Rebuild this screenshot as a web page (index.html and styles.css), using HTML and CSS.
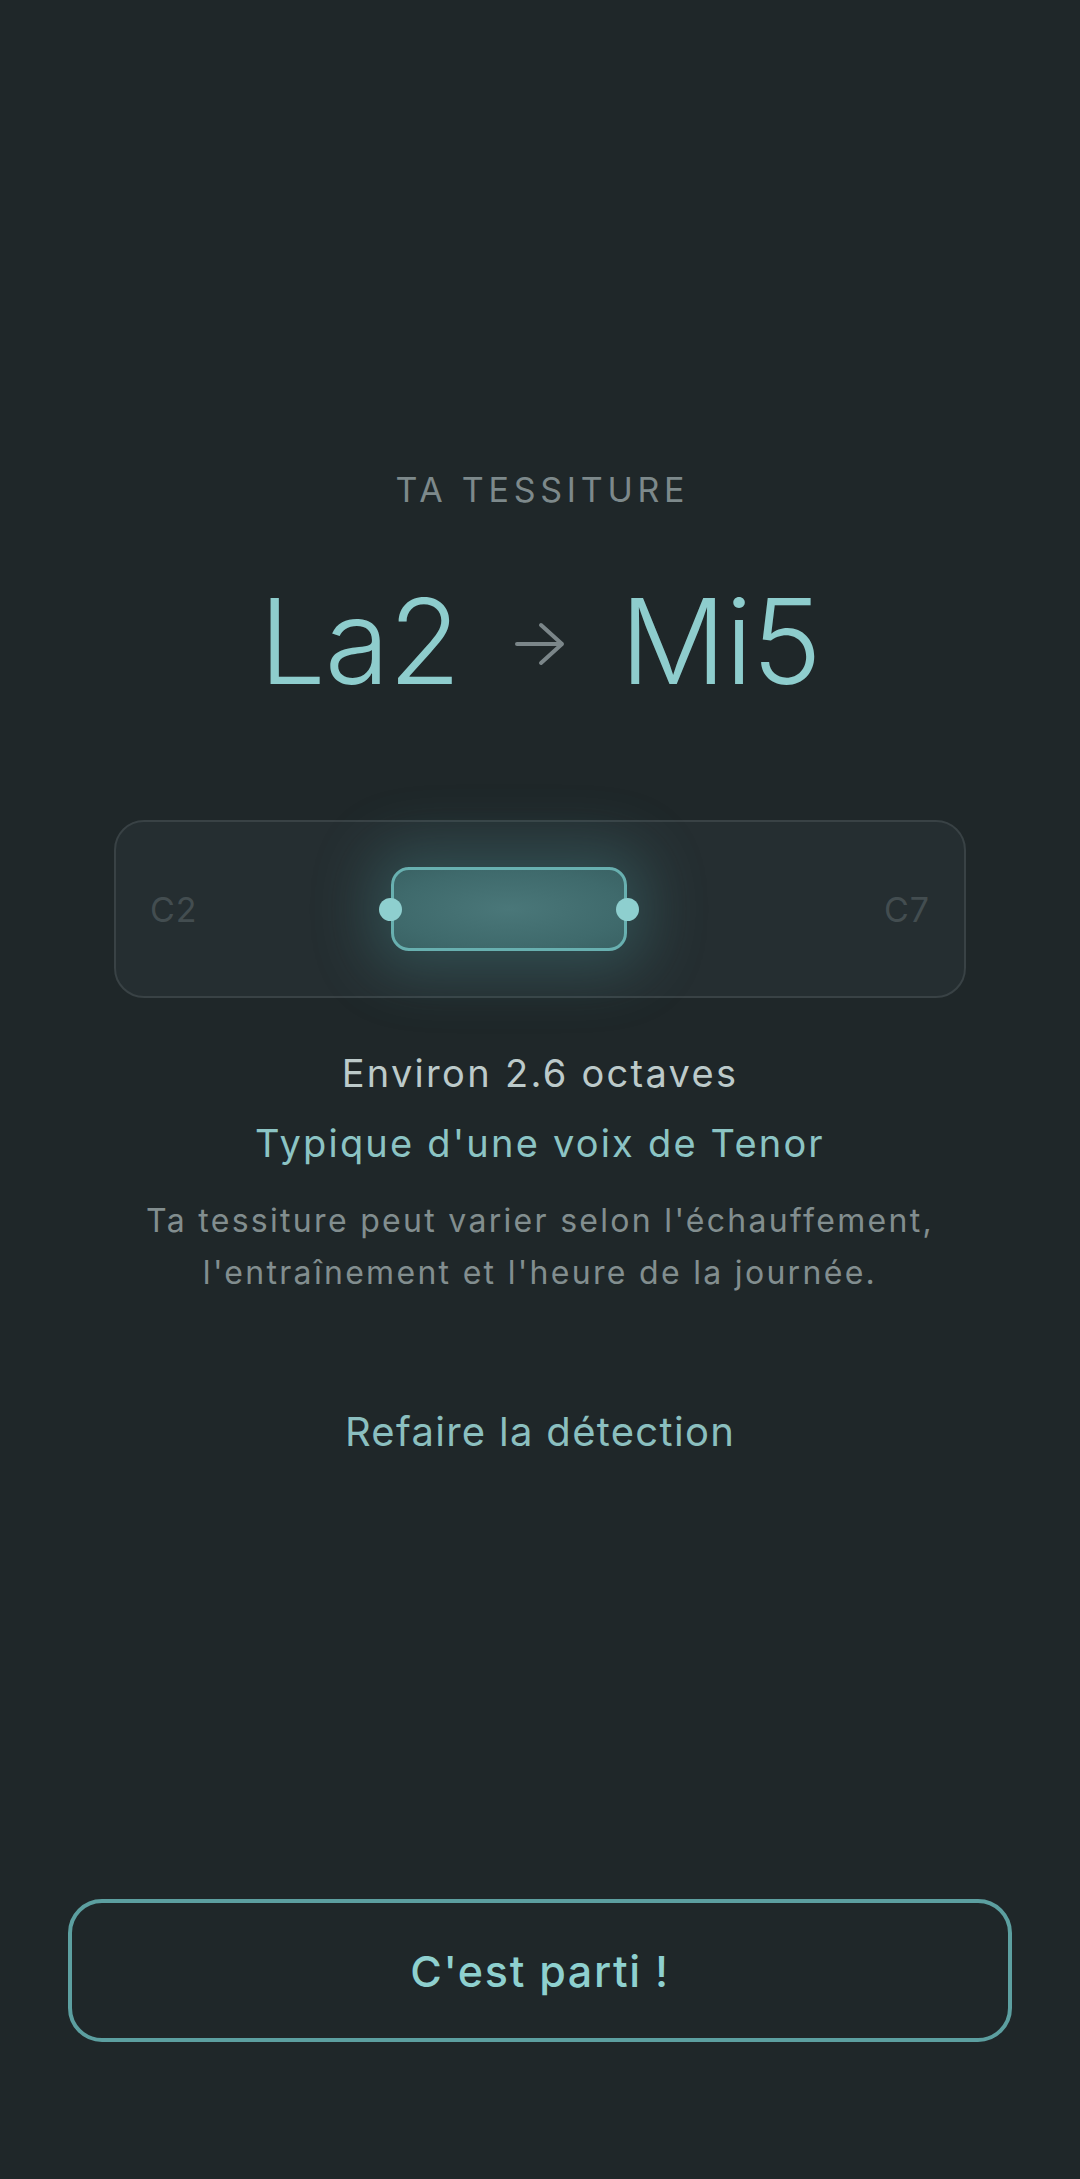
FILE: index.html
```html
<!DOCTYPE html>
<html lang="fr">
<head>
<meta charset="utf-8">
<title>Ta tessiture</title>
<link rel="stylesheet" href="styles.css">
</head>
<body>
<main class="screen">
  <p class="label">TA TESSITURE</p>
  <div class="range-title">
    <span class="note">La2</span>
    <svg class="arrow" width="50" height="44" viewBox="0 0 50 44" aria-hidden="true">
      <path d="M2 22 H47 M26 3 L47 22 L26 41" fill="none" stroke="#7b8689" stroke-width="4" stroke-linecap="round" stroke-linejoin="round"/>
    </svg>
    <span class="note">Mi5</span>
  </div>
  <div class="card">
    <span class="edge">C2</span>
    <div class="track">
      <div class="bar" style="left: 32.4%; width: 27.9%;">
        <span class="dot dot-left"></span>
        <span class="dot dot-right"></span>
      </div>
    </div>
    <span class="edge">C7</span>
  </div>
  <p class="octaves">Environ 2.6 octaves</p>
  <p class="voice">Typique d'une voix de Tenor</p>
  <p class="note-text">Ta tessiture peut varier selon l'échauffement,<br>l'entraînement et l'heure de la journée.</p>
  <a class="redo" href="#">Refaire la détection</a>
  <div class="spacer"></div>
  <button class="cta" type="button">C'est parti !</button>
</main>
</body>
</html>
```
FILE: styles.css
```css
* { box-sizing: border-box; }
html, body {
  margin: 0;
  padding: 0;
  background: #1f2729;
}
body {
  font-family: Inter, "Noto Sans", "DejaVu Sans", sans-serif;
}
.screen {
  min-height: 2179px;
  display: flex;
  flex-direction: column;
  align-items: center;
  padding: 470px 0 137px;
}
.label {
  margin: 0;
  font-size: 34px;
  line-height: 40px;
  letter-spacing: 0.14em;
  color: #7d898b;
  font-weight: 400;
  padding-left: 0.14em;
}
.range-title {
  margin-top: 61px;
  display: flex;
  align-items: center;
  gap: 55px;
  height: 140px;
}
.note {
  font-size: 118px;
  line-height: 140px;
  font-weight: 300;
  letter-spacing: -1px;
  color: #8ecdcd;
}
.arrow { display: block; margin-top: 6px; }
.card {
  margin-top: 109px;
  width: 852px;
  height: 178px;
  border: 2px solid #394245;
  border-radius: 30px;
  background: #252e31;
  display: flex;
  align-items: center;
  padding: 0 34px;
}
.edge {
  font-size: 34px;
  letter-spacing: 1px;
  color: #434d50;
  width: 48px;
}
.edge:last-child { text-align: right; }
.track {
  position: relative;
  flex: 1;
  height: 100%;
  margin: 0 -82px;
}
.bar {
  position: absolute;
  top: 45px;
  height: 84px;
  border: 3px solid #68b0b0;
  border-radius: 18px;
  background: radial-gradient(ellipse at center, #4a7779 0%, #3f6a6c 70%, #3a6264 100%);
  box-shadow: 0 0 60px 20px rgba(80, 156, 158, 0.3);
}
.dot {
  position: absolute;
  top: 50%;
  width: 23px;
  height: 23px;
  margin-top: -11.5px;
  border-radius: 50%;
  background: #8ecfcf;
}
.dot-left { left: -15px; }
.dot-right { right: -15px; }
.octaves {
  margin: 51px 0 0;
  font-size: 38px;
  line-height: 48px;
  letter-spacing: 2.3px;
  color: #bccaca;
}
.voice {
  margin: 22px 0 0;
  font-size: 38px;
  line-height: 48px;
  letter-spacing: 2.2px;
  color: #8cc4c4;
}
.note-text {
  margin: 28px 0 0;
  font-size: 32px;
  line-height: 52px;
  letter-spacing: 2.3px;
  color: #828e8f;
  text-align: center;
}
.redo {
  margin-top: 109px;
  font-size: 40px;
  line-height: 48px;
  letter-spacing: 1.3px;
  color: #8bbfbf;
  text-decoration: none;
}
.spacer { flex: 1; }
.cta {
  width: 944px;
  height: 143px;
  border: 4px solid #5c9fa0;
  border-radius: 34px;
  background: transparent;
  color: #8ed0cf;
  font-family: Inter, "Noto Sans", sans-serif;
  font-size: 43px;
  font-weight: 500;
  letter-spacing: 1.7px;
  cursor: pointer;
}
```
